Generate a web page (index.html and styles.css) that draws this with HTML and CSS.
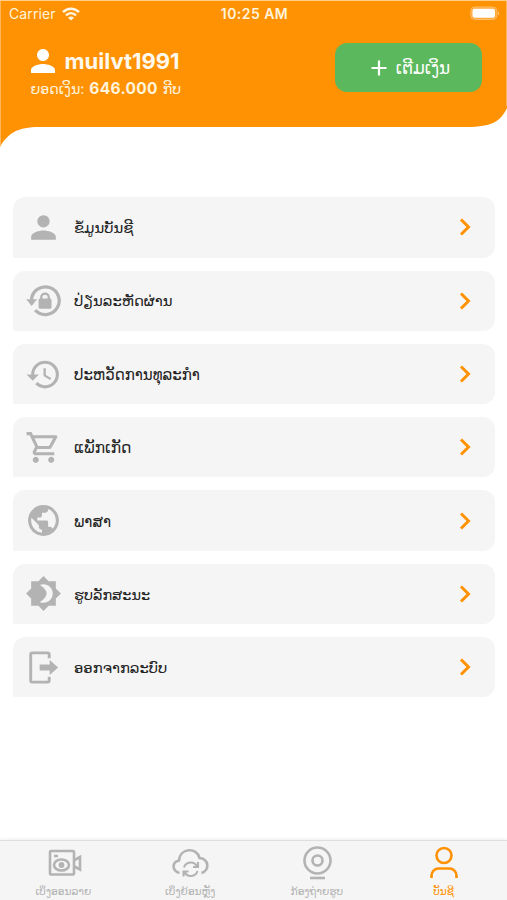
FILE: index.html
```html
<!DOCTYPE html>
<html lang="lo">
<head>
<meta charset="utf-8">
<title>ບັນຊີ</title>
<link rel="stylesheet" href="styles.css">
</head>
<body>
<div class="app">
  <header class="header">
    <svg class="header-bg" viewBox="0 0 507 148"><path d="M0 0H507V1H0Z" fill="#ffcf8a"/><path d="M0 1H507V108C501 121 492 127 467 127H39C18 127 8 133 0 147Z" fill="#ff9203"/><path d="M.5 1V146M506.5 1V106" stroke="#ffb75a" fill="none"/></svg>
    <div class="status">
      <div class="carrier"><span class="carrier-name">Carrier</span>
        <svg class="wifi" viewBox="0 0 18 14" fill="none" stroke="#fff6e4" stroke-width="2.5"><path d="M1 5.200C5.500.5 12.500.5 17 5.200M4 8.400C7 5.400 11 5.400 14 8.400"/><path d="M9 13.500L6 10.700Q9 8.300 12 10.700Z" fill="#fff6e4" stroke="none"/></svg>
      </div>
      <span class="time">10:25 AM</span>
      <svg class="battery" viewBox="0 0 30 15"><rect x=".8" y="1" width="26" height="12.500" rx="4" fill="#ffa93a" stroke="#ffbd69"/><rect x="2.500" y="2.700" width="22.500" height="9" rx="2" fill="#fff"/><path d="M28 5q2 2.300 0 4.600z" fill="#ffcf8a"/></svg>
    </div>
    <div class="profile">
      <div class="who">
        <div class="user"><svg class="user-icon" viewBox="4 4 16 16"><path fill="#fff" d="M12 12c2.210 0 4-1.790 4-4s-1.790-4-4-4-4 1.790-4 4 1.790 4 4 4zm0 2c-2.670 0-8 1.340-8 4v2h16v-2c0-2.660-5.330-4-8-4z"/></svg><span class="name">muilvt1991</span></div>
        <div class="balance"><span class="lao">ຍອດເງິນ:</span><b>646.000</b><span class="lao">ກີບ</span></div>
      </div>
      <button class="topup"><svg viewBox="0 0 16 16"><path d="M8 .5v15M.5 8h15" stroke="#fff" stroke-width="2.200"/></svg><span>ເຕີມເງິນ</span></button>
    </div>
  </header>

  <main class="menu">
    <a class="row"><svg class="ic" viewBox="0 0 24 24"><path d="M12 12c2.210 0 4-1.790 4-4s-1.790-4-4-4-4 1.790-4 4 1.790 4 4 4zm0 2c-2.670 0-8 1.340-8 4v2h16v-2c0-2.660-5.330-4-8-4z"/></svg><span class="label l1">ຂໍ້ມູນບັນຊີ</span><svg class="chev" viewBox="0 0 12 18"><path d="M2 1.500L9.500 9L2 16.500"/></svg></a>
    <a class="row"><svg class="ic" viewBox="0 0 24 24"><path d="M4.200 11.500A9 9 0 1 1 6.600 18.300" fill="none" stroke="#b3b3b3" stroke-width="2.100"/><path d="M.8 11.200h7L4.300 15.600z"/><path d="M16.200 10.700V10a3.200 3.200 0 0 0-6.400 0v.7a1 1 0 0 0-1 1v4.700a1 1 0 0 0 1 1h6.400a1 1 0 0 0 1-1v-4.700a1 1 0 0 0-1-1zm-4.900 0V10a1.700 1.700 0 0 1 3.400 0v.7z"/></svg><span class="label l2">ປ່ຽນລະຫັດຜ່ານ</span><svg class="chev" viewBox="0 0 12 18"><path d="M2 1.500L9.500 9L2 16.500"/></svg></a>
    <a class="row"><svg class="ic" viewBox="0 0 24 24"><path d="M13 3a9 9 0 0 0-9 9H1l3.890 3.890.07.14L9 12H6c0-3.870 3.130-7 7-7s7 3.130 7 7-3.130 7-7 7c-1.930 0-3.680-.790-4.940-2.060l-1.420 1.420A8.954 8.954 0 0 0 13 21a9 9 0 0 0 0-18zm-1 5v5l4.280 2.540.72-1.210-3.500-2.080V8H12z"/></svg><span class="label l3">ປະຫວັດການທຸລະກຳ</span><svg class="chev" viewBox="0 0 12 18"><path d="M2 1.500L9.500 9L2 16.500"/></svg></a>
    <a class="row"><svg class="ic" viewBox="0 0 24 24"><path d="M15.550 13c.75 0 1.410-.410 1.750-1.030l3.580-6.490A.996.996 0 0 0 20.010 4H5.210l-.940-2H1v2h2l3.600 7.590-1.350 2.440C4.520 15.370 5.480 17 7 17h12v-2H7l1.100-2h7.450zM6.160 6h12.150l-2.760 5H8.530L6.160 6zM7 18c-1.100 0-1.990.9-1.990 2S5.900 22 7 22s2-.9 2-2-.9-2-2-2zm10 0c-1.100 0-1.990.9-1.990 2s.890 2 1.990 2 2-.9 2-2-.9-2-2-2z"/></svg><span class="label l4">ແພັກເກັດ</span><svg class="chev" viewBox="0 0 12 18"><path d="M2 1.500L9.500 9L2 16.500"/></svg></a>
    <a class="row"><svg class="ic" viewBox="0 0 24 24"><path d="M12 2C6.480 2 2 6.480 2 12s4.480 10 10 10 10-4.480 10-10S17.520 2 12 2zm-1 17.930c-3.950-.490-7-3.850-7-7.930 0-.620.080-1.210.210-1.790L9 15v1c0 1.100.9 2 2 2v1.930zm6.900-2.540c-.260-.810-1-1.390-1.900-1.390h-1v-3c0-.550-.450-1-1-1H8v-2h2c.550 0 1-.450 1-1V7h2c1.100 0 2-.9 2-2v-.410c2.930 1.190 5 4.060 5 7.410 0 2.080-.8 3.970-2.100 5.390z"/></svg><span class="label l5">ພາສາ</span><svg class="chev" viewBox="0 0 12 18"><path d="M2 1.500L9.500 9L2 16.500"/></svg></a>
    <a class="row"><svg class="ic" viewBox="0 0 24 24"><path d="M20 8.690V4h-4.690L12 .690 8.690 4H4v4.690L.690 12 4 15.310V20h4.690L12 23.310 15.310 20H20v-4.690L23.310 12 20 8.690zM12 18c-.890 0-1.740-.2-2.500-.550C12.060 16.290 14 13.720 14 12s-1.940-4.290-4.500-5.450C10.260 6.200 11.110 6 12 6c3.310 0 6 2.690 6 6s-2.690 6-6 6z"/></svg><span class="label l6">ຮູບລັກສະນະ</span><svg class="chev" viewBox="0 0 12 18"><path d="M2 1.500L9.500 9L2 16.500"/></svg></a>
    <a class="row"><svg class="ic" viewBox="0 0 24 24"><path d="M15.700 6V3.500a1 1 0 0 0-1-1h-10a1 1 0 0 0-1 1v17a1 1 0 0 0 1 1h10a1 1 0 0 0 1-1V18" fill="none" stroke="#b3b3b3" stroke-width="1.900"/><path d="M9.500 10H16V7.200L21.500 12 16 16.800V14H9.500z"/></svg><span class="label l7">ອອກຈາກລະບົບ</span><svg class="chev" viewBox="0 0 12 18"><path d="M2 1.500L9.500 9L2 16.500"/></svg></a>
  </main>

  <nav class="tabs">
    <a class="tab"><svg viewBox="0 0 40 36"><rect x="7" y="7" width="24" height="23.500" rx="1"/><path d="M11 12h4M31.500 16L37 13V25.500L31.500 22.500"/><ellipse cx="18.500" cy="21" rx="7.500" ry="5.500"/><circle cx="18.500" cy="21" r="1.600" fill="#b3b3b3"/></svg><span>ເບິ່ງອອນລາຍ</span></a>
    <a class="tab"><svg viewBox="0 0 40 36"><path d="M9.500 29C1.500 26.500 2 18 9 16.500C10 3.500 27 3 29.500 14C39 15 40 26 31.500 29"/><path d="M14 23.500A7 7 0 0 1 27 22.500M28 18v5h-5M27.500 27A7 7 0 0 1 14.500 28M13.500 32.500v-5h5" stroke-width="2.100"/></svg><span>ເບິ່ງຍ້ອນຫຼັງ</span></a>
    <a class="tab"><svg viewBox="0 0 40 36"><circle cx="20.500" cy="16.500" r="13"/><circle cx="20.500" cy="16.500" r="5"/><path d="M13 34h15"/></svg><span>ກ້ອງຖ່າຍຮູບ</span></a>
    <a class="tab active"><svg viewBox="0 0 40 36"><circle cx="20" cy="11.500" r="7.500"/><path d="M7.500 34V31.500a7 7 0 0 1 7-7h11a7 7 0 0 1 7 7V34"/></svg><span>ບັນຊີ</span></a>
  </nav>
</div>
</body>
</html>
```
FILE: styles.css
```css
* { box-sizing: border-box; }
body { margin: 0; background: #fff; font-family: Inter, "DejaVu Sans", sans-serif; }
.app { width: 507px; height: 900px; display: flex; flex-direction: column; overflow: hidden; }
.header { position: relative; height: 148px; color: #fff; }
.header-bg { position: absolute; left: 0; top: 0; width: 507px; height: 148px; }
.status { position: relative; height: 27.5px; display: grid; grid-template-columns: 1fr auto 1fr; align-items: center; padding: 0 7px 0 9px; font-size: 14px; color: #fff3dc; }
.carrier { display: flex; align-items: center; gap: 6px; }
.carrier-name { letter-spacing: .1px; }
.wifi { width: 18px; height: 14px; }
.time { font-weight: 600; font-size: 14px; letter-spacing: .45px; }
.battery { width: 30px; height: 15px; justify-self: end; }
.profile { position: relative; display: flex; justify-content: space-between; padding: 15.5px 25px 0 30.5px; }
.who { padding-top: 3.5px; }
.user { display: flex; align-items: center; gap: 10px; height: 28px; }
.user-icon { width: 24px; height: 24px; }
.name { font-weight: 700; font-size: 22px; line-height: 28px; color: #fff8ec; }
.balance { display: flex; align-items: center; gap: 5px; height: 28px; font-size: 15.5px; color: #fff3dc; }
.balance b { font-weight: 700; letter-spacing: .3px; }
.lao { font-size: 14.2px; }
.topup { width: 147px; height: 49px; border: 0; border-radius: 12px; background: #5cb85c; color: #fff; display: flex; align-items: center; justify-content: center; gap: 9px; font: 16.8px "DejaVu Sans", sans-serif; padding: 0 0 0 4px; }
.topup svg { width: 16px; height: 16px; }
.menu { flex: 1; padding: 49.3px 12px 0 13px; display: flex; flex-direction: column; gap: 13px; }
.row { height: 60.3px; flex: none; border-radius: 12px 12px 12px 2px; background: #f5f5f5; display: flex; align-items: center; padding: 0 24.5px 0 12px; }
.ic { width: 37px; height: 37px; fill: #b3b3b3; }
.label { flex: 1; margin-left: 12px; font-size: 15px; color: #222; white-space: nowrap; padding-top: 1px; }
.l1, .l2 { font-size: 14.8px; }
.l4 { font-size: 15.4px; }
.l6 { font-size: 14.5px; }
.l7 { font-size: 14.8px; }
.chev { width: 12px; height: 18px; fill: none; stroke: #ff9203; stroke-width: 3; }
.tabs { height: 60px; border-top: 1px solid #dedede; background: #f5f5f5; box-shadow: 0 -1px 3px #0001; display: grid; grid-template-columns: repeat(4, 1fr); }
.tab { display: flex; flex-direction: column; align-items: center; color: #b3b3b3; font-size: 10.6px; padding-top: 3px; white-space: nowrap; }
.tab svg { width: 40px; height: 36px; fill: none; stroke: currentColor; stroke-width: 2.6; }
.tab span { line-height: 16px; margin-top: 4px; }
.active { color: #ff9203; }
```
